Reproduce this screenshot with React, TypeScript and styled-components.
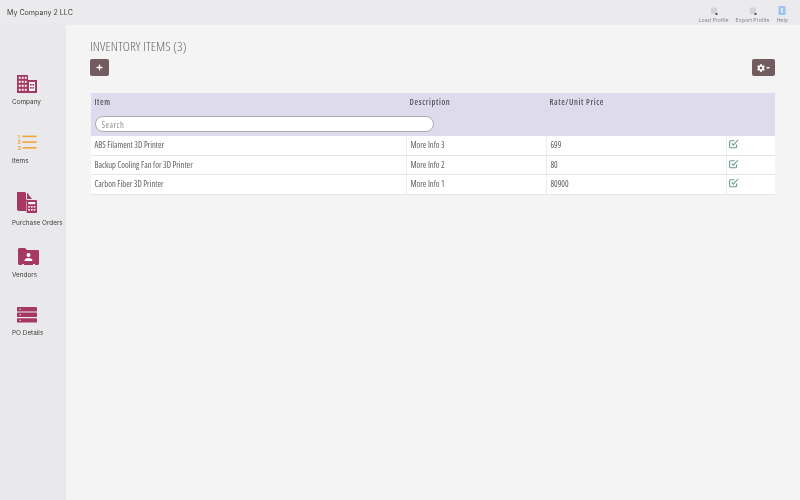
import React from "react";
import styled, { createGlobalStyle } from "styled-components";
import { FaPlus, FaCog } from "react-icons/fa";

const Global = createGlobalStyle`
  html, body { margin: 0; padding: 0; width: 800px; height: 500px; overflow: hidden; background: #f4f4f4; }
  #root { width: 800px; height: 500px; }
  * { box-sizing: border-box; }
`;

const Page = styled.div`
  width: 800px;
  height: 500px;
  display: flex;
  flex-direction: column;
  font-family: Inter, "Liberation Sans", sans-serif;
  will-change: transform;
`;

const TitleBar = styled.header`
  height: 25px;
  flex: none;
  background: #ebebed;
  display: flex;
  align-items: flex-start;
  justify-content: space-between;
  padding: 0 12px 0 7px;
`;

const CompanyName = styled.div`
  font-size: 7.1px;
  line-height: 10px;
  margin-top: 8px;
  color: #444;
`;

const TopActions = styled.div`
  display: flex;
  gap: 7px;
  padding-top: 6px;
`;

const TopAction = styled.div`
  display: flex;
  flex-direction: column;
  align-items: center;
  font-size: 5.3px;
  line-height: 7px;
  color: #8b8b8f;
  gap: 2px;
`;

const Body = styled.div`
  flex: 1;
  display: flex;
  min-height: 0;
`;

const Sidebar = styled.nav`
  width: 66px;
  flex: none;
  background: #e9e9eb;
  display: flex;
  flex-direction: column;
  padding: 50px 0 0 12px;
`;

const NavItem = styled.div<{ $h: number; $gap: number }>`
  height: ${(p) => p.$h}px;
  display: flex;
  flex-direction: column;
  align-items: flex-start;
  gap: ${(p) => p.$gap}px;
  font-size: 6.4px;
  line-height: 9px;
  color: #3e3e3e;
  white-space: nowrap;
  svg { margin-left: 5px; display: block; }
`;

const Main = styled.main`
  flex: 1;
  padding: 13px 25px 0 24px;
  min-width: 0;
`;

const Narrow = `font-family: "Open Sans", "Liberation Sans", sans-serif; font-stretch: 75%;`;

const Heading = styled.h1`
  margin: 0;
  ${Narrow}
  font-weight: 300;
  font-size: 13.5px;
  line-height: 17px;
  letter-spacing: 0.08px;
  color: #666668;
`;

const Buttons = styled.div`
  display: flex;
  justify-content: space-between;
  margin-top: 4px;
`;

const Btn = styled.button<{ $w: number }>`
  width: ${(p) => p.$w}px;
  height: 17px;
  border: none;
  border-radius: 2px;
  background: #725c60;
  color: #fff;
  display: flex;
  align-items: center;
  justify-content: center;
  gap: 1px;
  padding: 0;
`;

const Caret = styled.span`
  width: 0;
  height: 0;
  border-left: 2px solid transparent;
  border-right: 2px solid transparent;
  border-top: 2px solid #fff;
`;

const Table = styled.div`
  margin: 17px 0 0 1px;
  background: #fff;
`;

const HeadRow = styled.div`
  display: grid;
  grid-template-columns: 315px 140px 180px 50px;
  height: 43px;
  background: #dedcec;
  padding-top: 4px;
  ${Narrow}
  font-weight: 600;
  font-size: 8.2px;
  line-height: 10px;
  letter-spacing: 0.6px;
  color: #55555c;
`;

const HeadCell = styled.div`
  padding-left: 3.5px;
`;

const Search = styled.input`
  display: block;
  width: 339px;
  height: 16px;
  margin-top: 9px;
  border-radius: 8px;
  border: 1px solid #a9a8b4;
  border-bottom-width: 1.5px;
  background: #fff;
  padding: 0 6px;
  outline: none;
  ${Narrow}
  font-weight: 400;
  font-size: 8.5px;
  letter-spacing: 0.5px;
  &::placeholder { color: #8f8f8f; opacity: 1; }
`;

const Row = styled.div`
  display: grid;
  grid-template-columns: 315px 140px 180px 50px;
  height: 19.5px;
  background: #fff;
  border-bottom: 1px solid #e6e6e8;
  ${Narrow}
  font-weight: 400;
  font-size: 8.5px;
  line-height: 18px;
  color: #5c5c5c;
`;

const Cell = styled.div`
  padding-left: 3.5px;
  & + & { border-left: 1px solid #ececee; }
`;

const ActionCell = styled(Cell)`
  display: flex;
  align-items: center;
  padding-left: 2px;
  padding-bottom: 2px;
`;

const Building = () => (
  <svg width="20" height="18" viewBox="0 0 20 18">
    <path fill="#a5395f" d="M0 0h11v5h9v13H0z" />
    <g fill="#fff">
      {[1.8, 4.8, 7.8].map((x) => [1.8, 5.8, 9.8, 13.8].map((y) => <rect key={x + "-" + y} x={x} y={y} width="1.8" height="2" />))}
      <path d="M12 7h6v9h-6z" />
    </g>
    <g fill="#a5395f">
      <rect x="13" y="9" width="1.7" height="1.7" /><rect x="15.4" y="9" width="1.7" height="1.7" />
      <rect x="13" y="12" width="1.7" height="1.7" /><rect x="15.4" y="12" width="1.7" height="1.7" />
    </g>
  </svg>
);

const Numbered = () => (
  <svg width="20" height="17" viewBox="0 0 20 17">
    <g fill="#efa63f">
      <rect x="5.5" y="0.6" width="14" height="1.6" /><rect x="5.5" y="6.3" width="14" height="1.6" /><rect x="5.5" y="12" width="14" height="1.6" />
      <text x="0.4" y="3.6" fontSize="5.4" fontWeight="700" fontFamily="Inter, sans-serif">1</text>
      <text x="0.4" y="9.3" fontSize="5.4" fontWeight="700" fontFamily="Inter, sans-serif">2</text>
      <text x="0.4" y="15" fontSize="5.4" fontWeight="700" fontFamily="Inter, sans-serif">3</text>
    </g>
  </svg>
);

const DocCalc = () => (
  <svg width="20" height="21" viewBox="0 0 20 21">
    <path fill="#a5395f" d="M0 0h8l1 1v6l1 1h4v1H9v10H2a2 2 0 0 1-2-2z" />
    <path fill="#a5395f" d="M10 0.5l5 6.5h-5z" />
    <rect x="9.5" y="8" width="10.5" height="13" rx="1" fill="#a5395f" />
    <g fill="#fff">
      <rect x="11.3" y="10" width="7" height="2.2" />
      {[11.3, 14, 16.7].map((x) => [14, 17].map((y) => <rect key={x + "-" + y} x={x} y={y} width="1.6" height="1.6" />))}
    </g>
  </svg>
);

const FolderUser = () => (
  <svg width="22" height="18" viewBox="-1 0 22 18">
    <path fill="#a5395f" d="M1 0h6l2 2h11a1 1 0 0 1 1 1v13l-1 1h-3v-1h-2v1H6v-1H4v1H1l-1-1V1z" />
    <circle cx="10.5" cy="7" r="2" fill="#fff" />
    <path fill="#fff" d="M6.5 13c0-2 1.5-3 4-3s4 1 4 3z" />
  </svg>
);

const Stack = () => (
  <svg width="20" height="16" viewBox="0 0 20 16">
    <g fill="#a5395f">
      <rect y="0" width="20" height="4.4" rx=".4" /><rect y="5.6" width="20" height="4.4" rx=".4" /><rect y="11.2" width="20" height="4.4" rx=".4" />
    </g>
    <g fill="#e9c6d2">
      <rect x="2.5" y="1.6" width="1.5" height="1.2" /><rect x="2.5" y="7.2" width="1.5" height="1.2" /><rect x="2.5" y="12.8" width="1.5" height="1.2" />
    </g>
  </svg>
);

const DocIcon = () => (
  <svg width="10" height="9" viewBox="0 0 10 9">
    <rect x="2" y="1.5" width="6" height="6.5" fill="#d3d3de" />
    <rect x="6.5" y="7" width="2" height="2" fill="#555" />
  </svg>
);

const HelpIcon = () => (
  <svg width="10" height="9" viewBox="0 0 10 9">
    <rect x="1.5" y="0" width="7" height="9" rx="1" fill="#9cc6ef" />
    <rect x="4.4" y="2" width="1.2" height="5" fill="#fff" />
  </svg>
);

const EditCheck = () => (
  <svg width="10" height="10" viewBox="0 0 10 10" fill="none" stroke="#6a9f94" strokeWidth="1.1">
    <path d="M7.6 5.6v2.2a1 1 0 0 1-1 1H1.6a1 1 0 0 1-1-1V2.8a1 1 0 0 1 1-1h4" />
    <path d="M2.8 4.4l1.6 1.7L9 1" />
  </svg>
);

const rows = [
  ["ABS Filament 3D Printer", "More Info 3", "699"],
  ["Backup Cooling Fan for 3D Printer", "More Info 2", "80"],
  ["Carbon Fiber 3D Printer", "More Info 1", "80900"],
];

export default function App() {
  return (
    <Page>
      <Global />
      <TitleBar>
        <CompanyName>My Company 2 LLC</CompanyName>
        <TopActions>
          <TopAction><DocIcon />Load Profile</TopAction>
          <TopAction><DocIcon />Export Profile</TopAction>
          <TopAction><HelpIcon />Help</TopAction>
        </TopActions>
      </TitleBar>
      <Body>
        <Sidebar>
          <NavItem $h={60} $gap={5}><Building />Company</NavItem>
          <NavItem $h={57} $gap={5}><Numbered />Items</NavItem>
          <NavItem $h={56} $gap={6}><DocCalc />Purchase Orders</NavItem>
          <NavItem $h={59} $gap={5}><FolderUser />Vendors</NavItem>
          <NavItem $h={40} $gap={6}><Stack />PO Details</NavItem>
        </Sidebar>
        <Main>
          <Heading>INVENTORY ITEMS (3)</Heading>
          <Buttons>
            <Btn $w={19}><FaPlus size={7} /></Btn>
            <Btn $w={23}><FaCog size={8} /><Caret /></Btn>
          </Buttons>
          <Table>
            <HeadRow>
              <HeadCell>
                Item
                <Search placeholder="Search" />
              </HeadCell>
              <HeadCell>Description</HeadCell>
              <HeadCell>Rate/Unit Price</HeadCell>
              <HeadCell />
            </HeadRow>
            {rows.map((r) => (
              <Row key={r[0]}>
                <Cell>{r[0]}</Cell>
                <Cell>{r[1]}</Cell>
                <Cell>{r[2]}</Cell>
                <ActionCell><EditCheck /></ActionCell>
              </Row>
            ))}
          </Table>
        </Main>
      </Body>
    </Page>
  );
}
